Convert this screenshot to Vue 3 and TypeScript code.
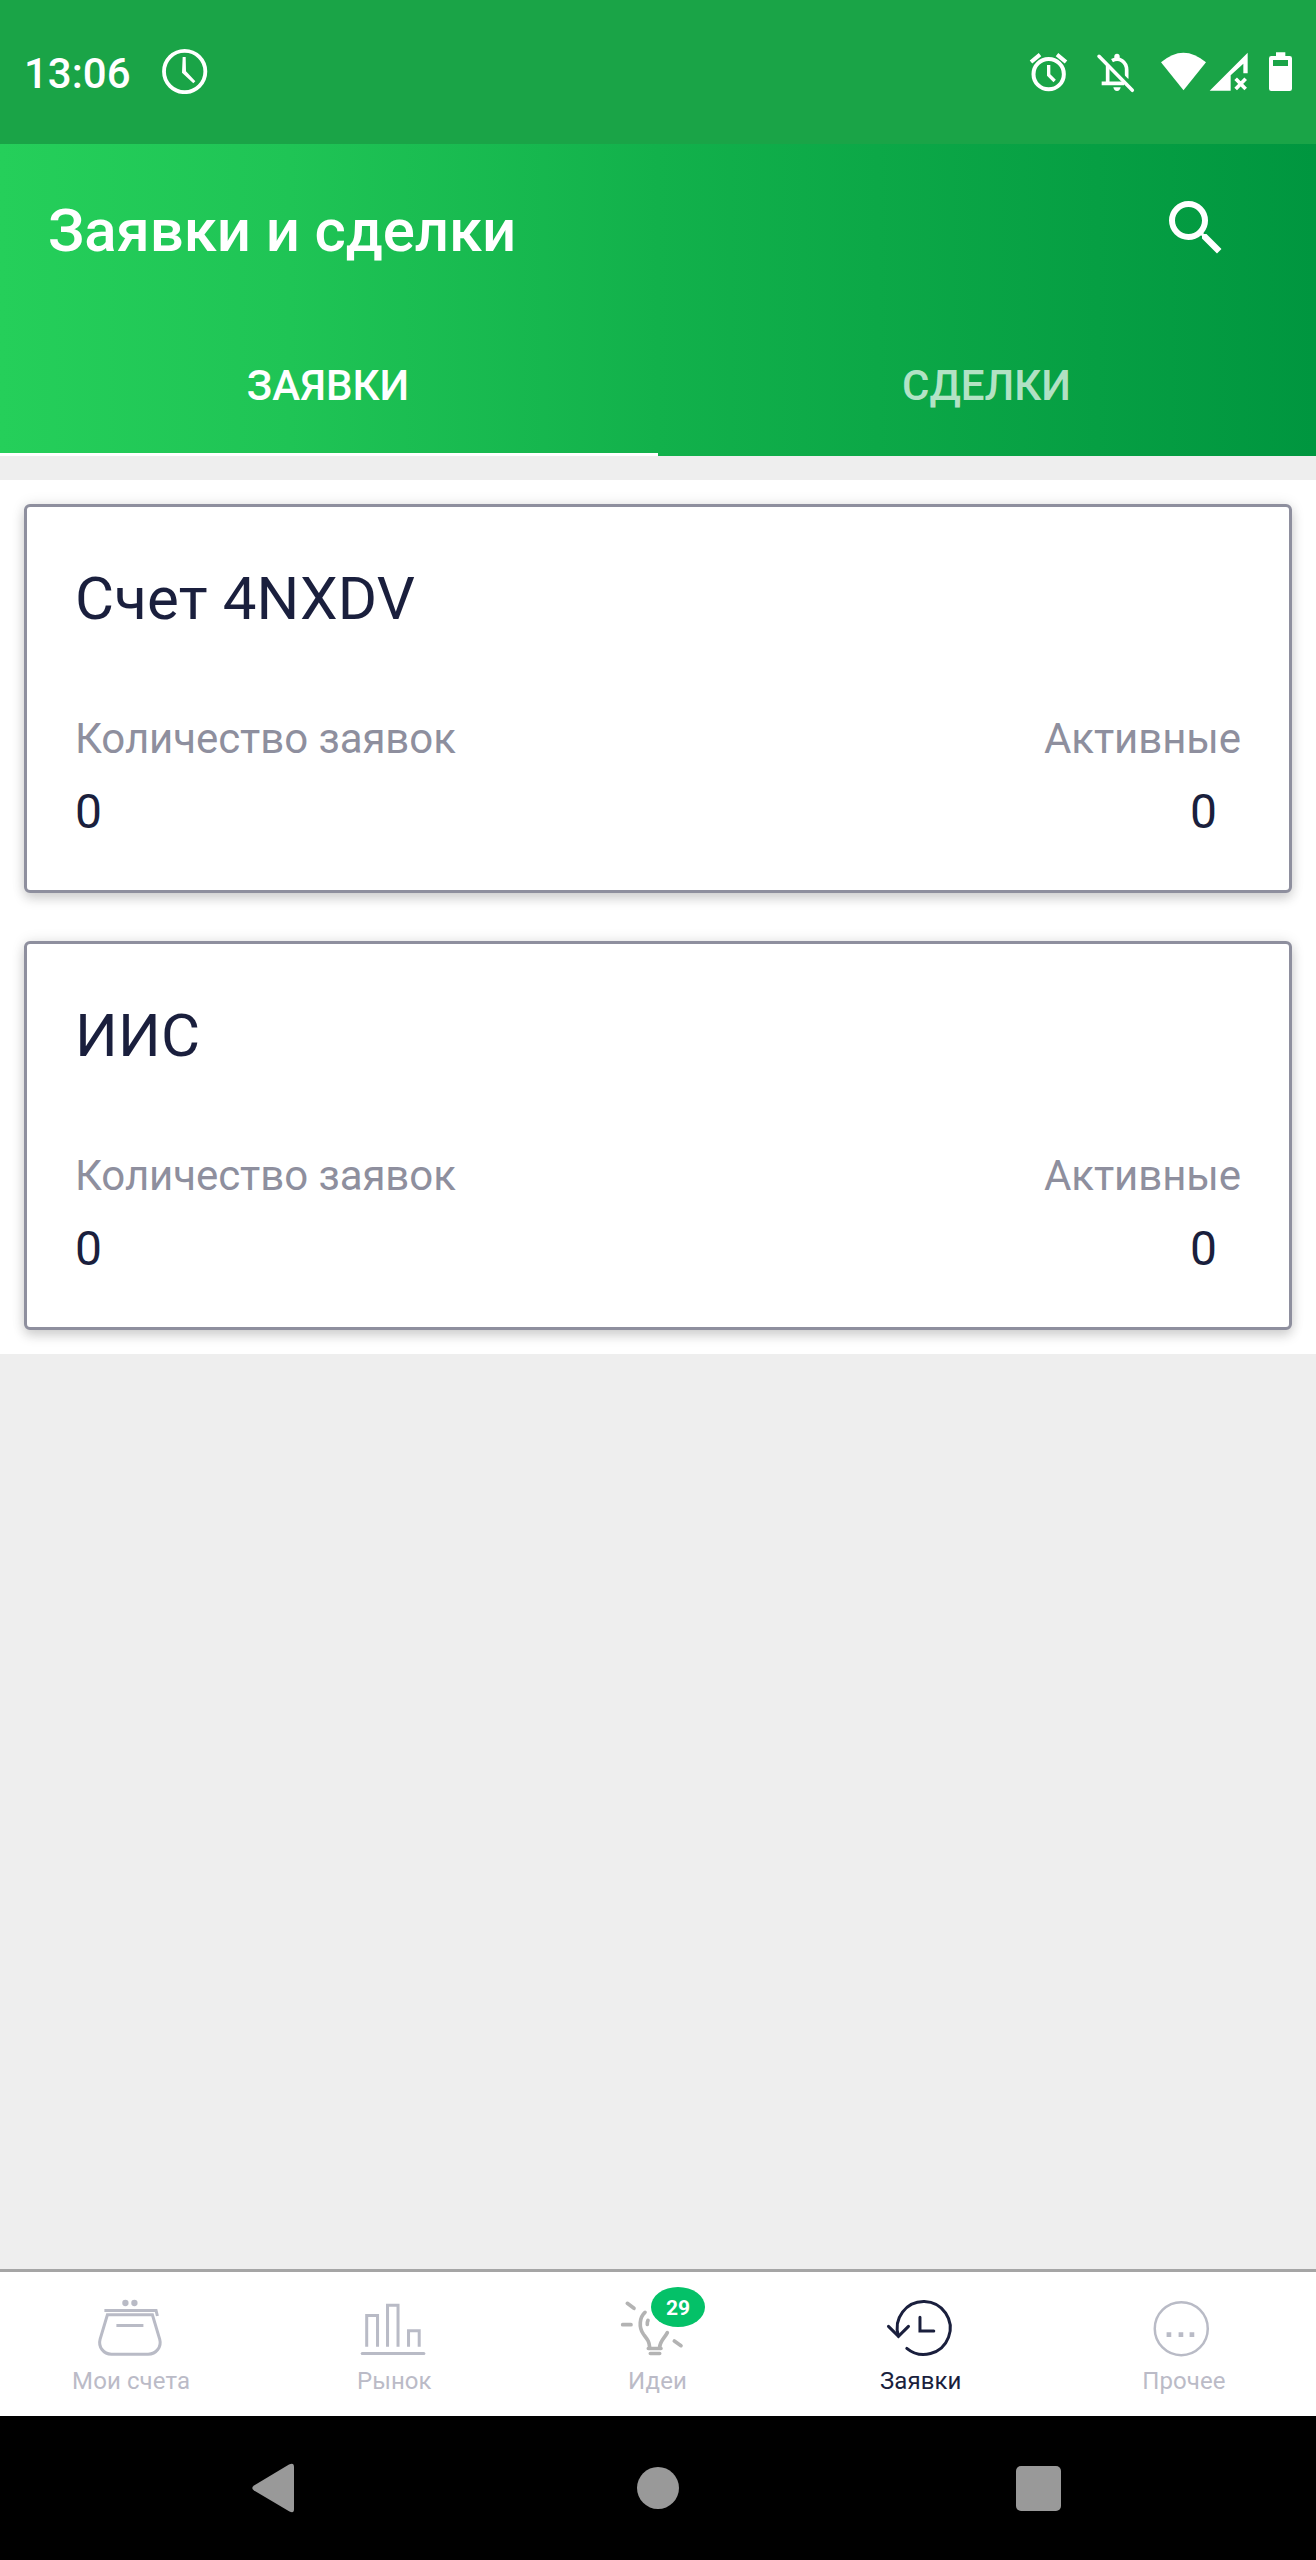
<script setup lang="ts">
interface Account {
  title: string
  total: number
  active: number
}

interface NavItem {
  id: string
  label: string
  viewBox: string
  badge?: number
}

const accounts: Account[] = [
  { title: 'Счет 4NXDV', total: 0, active: 0 },
  { title: 'ИИС', total: 0, active: 0 },
]

const navItems: NavItem[] = [
  { id: 'accounts', label: 'Мои счета', viewBox: '70.8 72 288 252' },
  { id: 'market', label: 'Рынок', viewBox: '860.4 72 288 252' },
  { id: 'ideas', label: 'Идеи', viewBox: '90 72 288 252', badge: 29 },
  { id: 'orders', label: 'Заявки', viewBox: '879.6 72 288 252' },
  { id: 'more', label: 'Прочее', viewBox: '169.2 72 288 252' },
]

const activeNav = 'orders'
</script>

<template>
  <div class="screen">
    <div class="status">
      <span class="time">13:06</span>
      <svg width="48" height="46" viewBox="480 84 144 138">
        <circle cx="554" cy="154.5" r="62" fill="none" stroke="#fff" stroke-width="11.5" />
        <path d="M548 111h9l1 43 28 30-6 6-34-32z" fill="#fff" />
      </svg>
      <div class="status-icons">
        <svg width="41" height="46" viewBox="84 84 123 138" fill="none" stroke="#fff" stroke-width="12">
          <circle cx="146" cy="162.500" r="45.500" />
          <path d="M93 126l27-22M171 104l27 22" />
          <path d="M146 135v30l18 18" stroke-width="10" />
        </svg>
        <svg class="bell" width="40" height="46" viewBox="288 84 120 138" fill="none" stroke="#fff">
          <path d="M336 122C358 109 380 126 380 150V176" stroke-width="11" />
          <path d="M323 136V190M305 190H372" stroke-width="11" />
          <path d="M343 118v-9a8 8 0 0 1 16 0v9z" fill="#fff" stroke="none" />
          <path d="M340 202h22q-2 11-11 11t-11-11z" fill="#fff" stroke="none" />
          <path d="M306 101L406 204" stroke="#1aa447" stroke-width="7" />
          <path d="M297 109L397 211" stroke-width="10.500" stroke-linecap="round" />
        </svg>
        <svg class="wifi" width="47" height="46" viewBox="480 84 141 138">
          <path d="M550.500 211L483 127Q550 69 618 127z" fill="#fff" />
        </svg>
        <svg class="signal" width="40" height="46" viewBox="627 84 120 138">
          <path d="M629 212L743 98V160H730V131L692 166V212z" fill="#fff" />
          <path d="M707 176l30 31M737 176l-30 31" stroke="#fff" stroke-width="11" />
        </svg>
        <svg class="battery" width="27" height="46" viewBox="801 84 81 138">
          <path fill-rule="evenodd" fill="#fff" d="M828 97h28v11h13q7 0 7 7v91q0 7-7 7h-55q-7 0-7-7v-91q0-7 7-7h14zM819 120v18h45v-18z" />
        </svg>
      </div>
    </div>

    <header class="header">
      <div class="toolbar">
        <h1>Заявки и сделки</h1>
        <svg width="72" height="72" viewBox="0 0 24 24" fill="#fff">
          <path d="M15.500 14h-.79l-.28-.27A6.471 6.471 0 0 0 16 9.500 6.500 6.500 0 1 0 9.500 16c1.610 0 3.090-.59 4.230-1.570l.27.28v.79l5 4.990L20.490 19l-4.990-5zm-6 0C7.010 14 5 11.990 5 9.500S7.010 5 9.500 5 14 7.010 14 9.500 11.990 14 9.500 14z" />
        </svg>
      </div>
      <div class="tabs">
        <div class="tab selected">ЗАЯВКИ</div>
        <div class="tab">СДЕЛКИ</div>
      </div>
    </header>

    <main class="content">
      <div class="list">
        <section v-for="account in accounts" :key="account.title" class="card">
          <h2>{{ account.title }}</h2>
          <div class="row labels">
            <span>Количество заявок</span>
            <span>Активные</span>
          </div>
          <div class="row values">
            <span>{{ account.total }}</span>
            <span>{{ account.active }}</span>
          </div>
        </section>
      </div>
    </main>

    <nav class="bottom-nav">
      <div v-for="item in navItems" :key="item.id" class="nav-item" :class="{ current: item.id === activeNav }">
        <svg width="96" height="84" :viewBox="item.viewBox" fill="none" stroke="#b9bbc6" stroke-width="9">
          <template v-if="item.id === 'accounts'">
            <g fill="#b9bbc6" stroke="none">
              <circle cx="195" cy="129" r="9.500" />
              <circle cx="222" cy="129" r="9.500" />
            </g>
            <path d="M132 151.500H287L291 168" />
            <path d="M141 164.500H276L298 238C304 260 288 282.500 263 282.500H153C129 282.500 113 260 119 238z" />
            <path d="M168 196.500H249" />
          </template>
          <template v-else-if="item.id === 'market'">
            <path d="M919.500 260V166.500H952V260M982 260V136H1013.500V260M1045 260V212H1077V260" />
            <path d="M906 280.500H1091" stroke-linecap="round" />
          </template>
          <g v-else-if="item.id === 'ideas'" stroke="#b3b3b3" stroke-width="11" stroke-linecap="round">
            <path d="M142 130l20 15M128 194h25M283 243l20 14" />
            <path d="M195 157C178 172 176 202 190 222C202 238 208 244 209 262M262 218C254 234 240 242 239 262" />
            <path d="M205 265.500H243M211 280.500H239" />
            <path d="M204 181q-3 6-2 12" />
          </g>
          <g v-else-if="item.id === 'orders'" stroke="#1a1f3d" stroke-linecap="round">
            <path d="M956 228A79.500 79.500 0 1 1 981 265" />
            <path d="M926 199L956 229L986 199" />
            <path d="M1020.500 172V213H1062" />
          </g>
          <template v-else>
            <circle cx="305" cy="206" r="79.500" stroke-width="7.500" />
            <path d="M261 224h14M297 224h14M330 224h14" stroke-width="14" />
          </template>
        </svg>
        <span v-if="item.badge" class="badge">{{ item.badge }}</span>
        <span class="nav-label">{{ item.label }}</span>
      </div>
    </nav>

    <div class="system-nav">
      <svg width="51" height="54" viewBox="0 0 51 54">
        <path d="M40 3.500Q45 1 45 6V48Q45 53 40.500 50.500L5 29.500Q1.500 27 5 24.500z" fill="#999" />
      </svg>
      <span class="home"></span>
      <span class="recents"></span>
    </div>
  </div>
</template>

<style>
body {
  margin: 0;
}
</style>

<style scoped>
.screen {
  width: 1316px;
  height: 2560px;
  display: flex;
  flex-direction: column;
  overflow: hidden;
  background: #eee;
  color: #1a1f3d;
  font-family: Roboto, sans-serif;
}

.screen * {
  box-sizing: border-box;
}

svg {
  display: block;
  flex: none;
}

.status {
  height: 144px;
  padding: 48px 22px 0 24px;
  display: flex;
  align-items: flex-start;
  background: #1aa447;
  color: #fff;
}

.time {
  width: 136px;
  font-size: 42px;
  font-weight: 500;
  line-height: 51px;
}

.status-icons {
  margin-left: auto;
  display: flex;
}

.bell {
  margin-left: 27px;
}

.wifi {
  margin-left: 24px;
}

.signal {
  margin-left: 2px;
}

.battery {
  margin-left: 18px;
}

.header {
  height: 312px;
  background: linear-gradient(90deg, #25cf5a 0%, #1fc455 22%, #12b14b 50%, #00963f 100%);
  color: #fff;
}

.toolbar {
  height: 168px;
  padding: 0 84px 0 48px;
  display: flex;
  align-items: center;
  justify-content: space-between;
}

h1 {
  margin: 0;
  padding-top: 5px;
  font-size: 60px;
  font-weight: 500;
  line-height: 70px;
  letter-spacing: -0.12px;
}

.tabs {
  display: flex;
  height: 144px;
}

.tab {
  flex: 0 0 50%;
  padding-right: 1px;
  line-height: 147px;
  text-align: center;
  font-size: 42px;
  font-weight: 500;
  color: rgba(255, 255, 255, 0.7);
}

.tab.selected {
  padding-right: 2px;
  color: #fff;
  border-bottom: 3px solid #fff;
}

.content {
  flex: 1;
  padding-top: 24px;
}

.list {
  padding: 24px;
  display: flex;
  flex-direction: column;
  gap: 48px;
  background: #fff;
}

.card {
  height: 389px;
  padding: 48px;
  border: 3px solid #8e8f9e;
  border-radius: 6px;
  background: #fff;
  box-shadow: 0 6px 12px rgba(0, 0, 0, 0.15), 0 0 14px rgba(0, 0, 0, 0.1);
}

h2 {
  margin: 0 0 67px;
  font-size: 60px;
  font-weight: 400;
  line-height: 87px;
  letter-spacing: 0.15px;
}

.row {
  display: flex;
  justify-content: space-between;
}

.labels {
  font-size: 42px;
  line-height: 60px;
  letter-spacing: -0.08px;
  color: #8e8f9e;
}

.values {
  padding-right: 24px;
  font-size: 48px;
  line-height: 85px;
}

.bottom-nav {
  height: 147px;
  display: flex;
  border-top: 3px solid #a5a5a5;
  background: #fff;
}

.nav-item {
  position: relative;
  flex: 1;
  padding-top: 12px;
  display: flex;
  flex-direction: column;
  align-items: center;
  color: #bbbbc7;
}

.nav-item.current {
  color: #1a1f3d;
}

.nav-label {
  padding-right: 1px;
  font-size: 24px;
  line-height: 26px;
  letter-spacing: 0.1px;
}

.badge {
  position: absolute;
  top: 15px;
  left: 124.600px;
  width: 54px;
  height: 40px;
  border-radius: 50%;
  background: #04c168;
  color: #fff;
  text-align: center;
  font-size: 21px;
  font-weight: 700;
  line-height: 43px;
}

.system-nav {
  height: 144px;
  padding: 0 255px 0 249px;
  display: flex;
  align-items: center;
  justify-content: space-between;
  background: #000;
}

.home {
  width: 42px;
  height: 42px;
  border-radius: 50%;
  background: #999;
}

.recents {
  width: 45px;
  height: 45px;
  border-radius: 5px;
  background: #999;
}
</style>
